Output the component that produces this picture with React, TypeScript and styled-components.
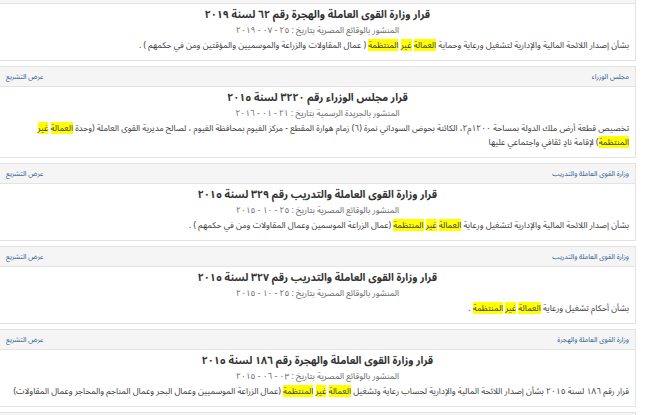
import { FunctionComponent, ReactNode } from 'react';
import styled, { createGlobalStyle } from 'styled-components';

const GlobalStyle = createGlobalStyle`
  html, body {
    margin: 0;
    padding: 0;
    background: #fff;
  }
  body {
    font-family: 'Noto Sans Arabic', 'DejaVu Sans', sans-serif;
    color: #333;
  }
`;

interface ILaw {
  source: string;
  title: string;
  published: string;
  body: ReactNode;
}

// the searched phrase, each word marked on its own
const Hl: FunctionComponent = () => (
  <>
    <Mark>العمالة</Mark> <Mark>غير</Mark> <Mark>المنتظمة</Mark>
  </>
);

const laws: ILaw[] = [
  {
    source: 'وزارة القوى العاملة والهجرة',
    title: 'قرار وزارة القوى العاملة والهجرة رقم ٦٢ لسنة ٢٠١٩',
    published: 'المنشور بالوقائع المصرية بتاريخ : ٢٥ - ٠٧ - ٢٠١٩',
    body: (
      <>
        بشأن إصدار اللائحة المالية والإدارية لتشغيل ورعاية وحماية <Hl /> ( عمال
        المقاولات والزراعة والموسميين والمؤقتين ومن في حكمهم ) .
      </>
    ),
  },
  {
    source: 'مجلس الوزراء',
    title: 'قرار مجلس الوزراء رقم ٣٢٢٠ لسنة ٢٠١٥',
    published: 'المنشور بالجريدة الرسمية بتاريخ : ٢١ - ٠١ - ٢٠١٦',
    body: (
      <>
        تخصيص قطعة أرض ملك الدولة بمساحة ١٢٠٠م٢، الكائنة بحوض السوداني نمرة (٦)
        زمام هوارة المقطع - مركز الفيوم بمحافظة الفيوم ، لصالح مديرية القوى العاملة
        (وحدة <Hl />) لإقامة نادٍ ثقافي واجتماعي عليها
      </>
    ),
  },
  {
    source: 'وزارة القوى العاملة والتدريب',
    title: 'قرار وزارة القوى العاملة والتدريب رقم ٣٢٩ لسنة ٢٠١٥',
    published: 'المنشور بالوقائع المصرية بتاريخ : ٢٥ - ١٠ - ٢٠١٥',
    body: (
      <>
        بشأن إصدار اللائحة المالية والإدارية لتشغيل ورعاية <Hl /> (عمال الزراعة
        الموسمين وعمال المقاولات ومن في حكمهم ) .
      </>
    ),
  },
  {
    source: 'وزارة القوى العاملة والتدريب',
    title: 'قرار وزارة القوى العاملة والتدريب رقم ٣٢٧ لسنة ٢٠١٥',
    published: 'المنشور بالوقائع المصرية بتاريخ : ٢٥ - ١٠ - ٢٠١٥',
    body: (
      <>
        بشأن أحكام تشغيل ورعاية <Hl /> .
      </>
    ),
  },
  {
    source: 'وزارة القوى العاملة والهجرة',
    title: 'قرار وزارة القوى العاملة والهجرة رقم ١٨٦ لسنة ٢٠١٥',
    published: 'المنشور بالوقائع المصرية بتاريخ : ٠٣ - ٠٦ - ٢٠١٥',
    body: (
      <>
        قرار رقم ١٨٦ لسنة ٢٠١٥ بشأن إصدار اللائحة المالية والإدارية لحساب رعاية
        وتشغيل <Hl /> (عمال الزراعة الموسميين وعمال البحر وعمال المناجم والمحاجر
        وعمال المقاولات)
      </>
    ),
  },
  {
    source: 'وزارة القوى العاملة والهجرة',
    title: 'قرار وزارة القوى العاملة والهجرة',
    published: 'المنشور بالوقائع المصرية',
    body: (
      <>
        بشأن <Hl />
      </>
    ),
  },
];

const App: FunctionComponent = () => {
  return (
    <>
      <GlobalStyle />
      <ResultsList dir="rtl">
        {laws.map((law, i) => (
          <LawCard key={i}>
            <CardHeading>
              <SourceName>{law.source}</SourceName>
              <ViewLink href="#">عرض التشريع</ViewLink>
            </CardHeading>
            <CardBody>
              <LawTitle>{law.title}</LawTitle>
              <LawDate>{law.published}</LawDate>
              <LawText>{law.body}</LawText>
            </CardBody>
          </LawCard>
        ))}
      </ResultsList>
    </>
  );
};

export default App;

const ResultsList = styled.div`
  width: 637px;
  height: 432px;
  overflow: hidden;
  margin: -17px 0 0 -1px;
  display: flex;
  flex-direction: column;
  gap: 5px;
`;

const LawCard = styled.div`
  flex: none;
  border: 1px solid #e3e3e3;
  background: #fff;
`;

const CardHeading = styled.div`
  display: flex;
  justify-content: space-between;
  align-items: center;
  padding: 3px 6px;
  background: #f5f5f5;
  border-bottom: 1px solid #e3e3e3;
  font-size: 7px;
  line-height: 13px;
`;

const SourceName = styled.span`
  color: #2d5a8e;
`;

const ViewLink = styled.a`
  color: #2d5a8e;
  text-decoration: none;
`;

const CardBody = styled.div`
  padding: 4px 6px 8px;
`;

const LawTitle = styled.div`
  text-align: center;
  font-weight: bold;
  font-size: 10.5px;
  line-height: 15px;
  color: #333;
`;

const LawDate = styled.div`
  text-align: center;
  font-size: 8.5px;
  line-height: 15px;
  color: #666;
`;

const LawText = styled.p`
  margin: 0;
  text-align: right;
  font-size: 8.5px;
  line-height: 14px;
  color: #3a3a3a;
`;

const Mark = styled.span`
  display: inline-block;
  line-height: 12px;
  background: #ffff00;
`;
